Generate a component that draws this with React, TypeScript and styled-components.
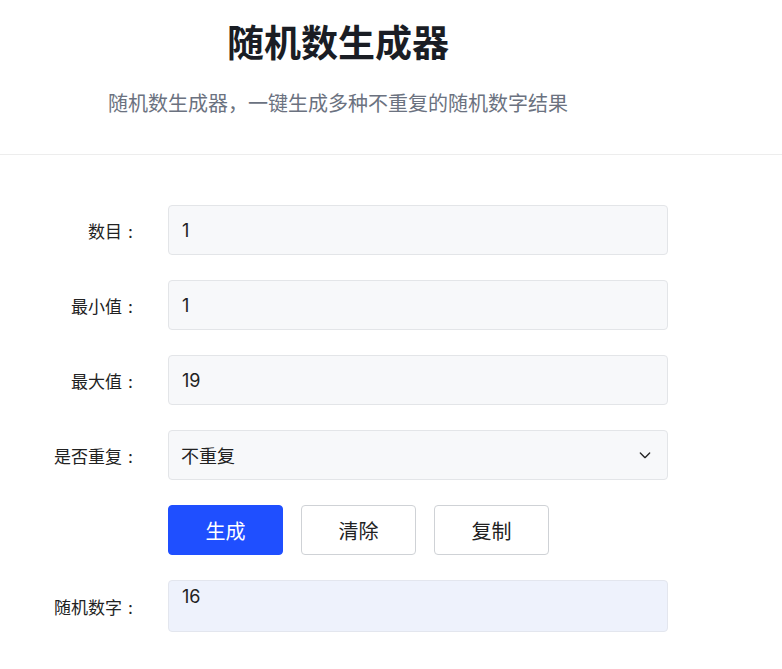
import styled, { createGlobalStyle } from "styled-components";

const GlobalStyle = createGlobalStyle`
  body {
    margin: 0;
    background: #fff;
    font-family: Inter, "Noto Sans CJK SC", sans-serif;
    color: #222;
  }
`;

const fields = [
  { label: "数目", value: "1" },
  { label: "最小值", value: "1" },
  { label: "最大值", value: "19" },
];

const App = () => {
  return (
    <>
      <GlobalStyle />
      <Header>
        <HeaderInner>
          <Title>随机数生成器</Title>
          <Subtitle>随机数生成器，一键生成多种不重复的随机数字结果</Subtitle>
        </HeaderInner>
      </Header>
      <Form>
        {fields.map((f) => (
          <Row key={f.label}>
            <Label>
              {f.label}
              <Colon>:</Colon>
            </Label>
            <Input defaultValue={f.value} />
          </Row>
        ))}
        <Row>
          <Label>
            是否重复<Colon>:</Colon>
          </Label>
          <SelectBox>
            <span>不重复</span>
            <svg width="16" height="16" viewBox="0 0 24 24" fill="none" stroke="#222" strokeWidth="2" strokeLinecap="round" strokeLinejoin="round">
              <path d="M5 9l7 7 7-7" />
            </svg>
          </SelectBox>
        </Row>
        <Row>
          <Label />
          <Buttons>
            <Button $primary>生成</Button>
            <Button>清除</Button>
            <Button>复制</Button>
          </Buttons>
        </Row>
        <Row>
          <Label>
            随机数字<Colon>:</Colon>
          </Label>
          <Result>16</Result>
        </Row>
      </Form>
    </>
  );
};

export default App;

const Header = styled.header`
  border-bottom: 1px solid #ededed;
  padding: 22px 0 37px;
`;

const HeaderInner = styled.div`
  width: 676px;
  text-align: center;
`;

const Title = styled.h1`
  margin: 0;
  font-size: 37px;
  line-height: 44px;
  font-weight: 700;
  color: #1a1d24;
`;

const Subtitle = styled.p`
  margin: 25px 0 0;
  font-size: 20px;
  line-height: 26px;
  color: #6b7280;
`;

const Form = styled.div`
  padding-top: 50px;
  display: flex;
  flex-direction: column;
  gap: 25px;
`;

const Row = styled.div`
  display: flex;
  align-items: center;
  gap: 30px;
`;

const Label = styled.div`
  box-sizing: border-box;
  width: 138px;
  padding-right: 5px;
  text-align: right;
  font-size: 17px;
  color: #222;
`;

const Colon = styled.span`
  margin-left: 6px;
`;

const Input = styled.input`
  box-sizing: border-box;
  width: 500px;
  height: 50px;
  padding: 0 13px;
  background: #f7f8fa;
  border: 1px solid #e3e5e8;
  border-radius: 4px;
  font-family: Inter, "Noto Sans CJK SC", sans-serif;
  font-size: 18px;
  color: #222;
  outline: none;
`;

const SelectBox = styled.div`
  box-sizing: border-box;
  width: 500px;
  height: 50px;
  padding: 0 14px 0 12px;
  background: #f7f8fa;
  border: 1px solid #e3e5e8;
  border-radius: 4px;
  display: flex;
  align-items: center;
  justify-content: space-between;
  font-size: 18px;
`;

const Buttons = styled.div`
  display: flex;
  gap: 18px;
`;

const Button = styled.button<{ $primary?: boolean }>`
  width: 115px;
  height: 50px;
  border-radius: 4px;
  font-family: Inter, "Noto Sans CJK SC", sans-serif;
  font-size: 20px;
  cursor: pointer;
  background: ${(p) => (p.$primary ? "#1f4fff" : "#fff")};
  color: ${(p) => (p.$primary ? "#fff" : "#222")};
  border: 1px solid ${(p) => (p.$primary ? "#1f4fff" : "#cfd2d6")};
`;

const Result = styled.div`
  box-sizing: border-box;
  width: 500px;
  height: 52px;
  padding: 4px 13px;
  background: #eef2fc;
  border: 1px solid #e3e6ee;
  border-radius: 4px;
  font-size: 18px;
  line-height: 24px;
`;
